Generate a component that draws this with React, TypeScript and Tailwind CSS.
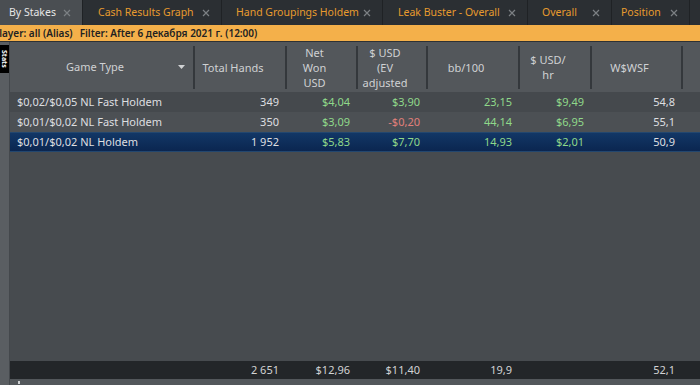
import React from "react";

const FONT = { fontFamily: '"Noto Sans", "Open Sans", sans-serif' };

const CloseX = () => (
  <svg width="8" height="8" viewBox="0 0 8 8" className="shrink-0">
    <path d="M1 1 L7 7 M7 1 L1 7" stroke="#7c8084" strokeWidth="1.2" />
  </svg>
);

const tabs = [
  { label: "By Stakes", w: 83, active: true, pl: 9 },
  { label: "Cash Results Graph", w: 139, pl: 15 },
  { label: "Hand Groupings Holdem", w: 161, pl: 14 },
  { label: "Leak Buster - Overall", w: 145, pl: 15 },
  { label: "Overall", w: 84, pl: 14 },
  { label: "Position", w: 78, pl: 9 },
];

const cols = [185, 92, 71, 70, 92, 72, 91];

type Cell = { v: string; c?: string };
const rows: { name: string; cells: Cell[]; selected?: boolean; bg: string }[] = [
  {
    name: "$0,02/$0,05 NL Fast Holdem",
    bg: "bg-[#45494d]",
    cells: [
      { v: "349" },
      { v: "$4,04", c: "text-[#8fd88a]" },
      { v: "$3,90", c: "text-[#8fd88a]" },
      { v: "23,15", c: "text-[#8fd88a]" },
      { v: "$9,49", c: "text-[#8fd88a]" },
      { v: "54,8" },
    ],
  },
  {
    name: "$0,01/$0,02 NL Fast Holdem",
    bg: "bg-[#4c5054]",
    cells: [
      { v: "350" },
      { v: "$3,09", c: "text-[#8fd88a]" },
      { v: "-$0,20", c: "text-[#e07f7a]" },
      { v: "44,14", c: "text-[#8fd88a]" },
      { v: "$6,95", c: "text-[#8fd88a]" },
      { v: "55,1" },
    ],
  },
  {
    name: "$0,01/$0,02 NL Holdem",
    selected: true,
    bg: "bg-[linear-gradient(to_bottom,#123766,#0b2650)]",
    cells: [
      { v: "1 952" },
      { v: "$5,83", c: "text-[#8fd88a]" },
      { v: "$7,70", c: "text-[#8fd88a]" },
      { v: "14,93", c: "text-[#8fd88a]" },
      { v: "$2,01", c: "text-[#8fd88a]" },
      { v: "50,9" },
    ],
  },
];

const headers: React.ReactNode[] = [
  "Total Hands",
  <>Net<br />Won<br />USD</>,
  <>$ USD<br />(EV<br />adjusted</>,
  "bb/100",
  <>$ USD/<br />hr</>,
  "W$WSF",
];

const Sep = () => <div className="w-[2px] h-[43px] bg-[#34383c] shrink-0" />;

export default function App() {
  return (
    <div
      className="w-[700px] h-[385px] flex flex-col overflow-hidden bg-[#484c50] text-[11px]"
      style={FONT}
    >
      {/* Tab bar */}
      <div className="h-[25px] flex bg-[#2b2f33] shrink-0">
        {tabs.map((t) => (
          <div
            key={t.label}
            style={{ width: t.w, paddingLeft: t.pl }}
            className={`h-full flex items-center justify-between shrink-0 border-r border-[#1f2225] text-[10.5px] pr-[11px] ${
              t.active ? "bg-[#4a4e52] text-[#e6e6e6]" : "text-[#e89b2e]"
            }`}
          >
            <span className="whitespace-nowrap">{t.label}</span>
            <CloseX />
          </div>
        ))}
        <div className="flex-1" />
      </div>

      {/* Filter bar */}
      <div className="h-[16px] bg-[#f4b04a] flex items-center overflow-hidden shrink-0 text-[10px] font-semibold text-[#222222] whitespace-nowrap">
        <span className="-ml-[7px]">Player: all (Alias)</span>
        <span className="ml-[7px]">Filter: After 6 декабря 2021 г. (12:00)</span>
      </div>

      <div className="h-[1px] bg-[#2e3134] shrink-0" />

      {/* Body */}
      <div className="flex-1 flex min-h-0">
        {/* Left strip */}
        <div className="w-[10px] bg-[#5a5e62] border-r border-[#44484c] shrink-0 flex flex-col pt-[3px]">
          <div className="w-[9px] h-[28px] bg-black flex items-center justify-center">
            <span
              className="text-white text-[7px] font-bold leading-none"
              style={{ writingMode: "vertical-rl" }}
            >
              Stats
            </span>
          </div>
        </div>

        {/* Main grid */}
        <div className="flex-1 flex flex-col min-w-0">
          {/* Header */}
          <div className="h-[50px] bg-[#53575b] flex items-center text-[#cfd1d3] shrink-0">
            <div style={{ width: cols[0] }} className="h-full flex items-center shrink-0">
              <div className="flex-1 flex items-center justify-center pl-[2px]">Game Type</div>
              <svg width="7" height="4" viewBox="0 0 7 4" className="mr-[8px]">
                <path d="M0 0 L7 0 L3.5 4 Z" fill="#d0d2d4" />
              </svg>
              <Sep />
            </div>
            {headers.map((h, i) => (
              <div
                key={i}
                style={{ width: cols[i + 1] }}
                className="h-full flex items-center shrink-0"
              >
                <div className="flex-1 text-center leading-[15px] pr-[14px]">{h}</div>
                <Sep />
              </div>
            ))}
            <div className="flex-1" />
          </div>

          {/* Rows */}
          {rows.map((r) => (
            <div
              key={r.name}
              className={`h-[20px] flex items-center shrink-0 ${r.bg} ${
                r.selected ? "border-y border-[#23476f]" : ""
              }`}
            >
              <div
                style={{ width: cols[0] }}
                className="pl-[7px] text-[#dedfe0] whitespace-nowrap shrink-0"
              >
                {r.name}
              </div>
              {r.cells.map((c, i) => (
                <div
                  key={i}
                  style={{ width: cols[i + 1] }}
                  className={`text-right pr-[8px] whitespace-nowrap shrink-0 ${
                    c.c ?? "text-[#dedfe0]"
                  }`}
                >
                  {c.v}
                </div>
              ))}
            </div>
          ))}

          <div className="flex-1 bg-[#474b4f]" />

          {/* Footer totals */}
          <div className="h-[18px] bg-[#232629] flex items-center shrink-0 text-[#d2d3d4]">
            <div style={{ width: cols[0] }} className="shrink-0" />
            {["2 651", "$12,96", "$11,40", "19,9", "", "52,1"].map((v, i) => (
              <div
                key={i}
                style={{ width: cols[i + 1] }}
                className="text-right pr-[8px] whitespace-nowrap shrink-0"
              >
                {v}
              </div>
            ))}
          </div>
          <div className="h-[6px] bg-[#53575b] shrink-0 flex items-start pl-[8px]">
            <div className="w-[2px] h-[3px] mt-[2px] bg-[#cfd1d3]" />
          </div>
        </div>
      </div>
    </div>
  );
}
